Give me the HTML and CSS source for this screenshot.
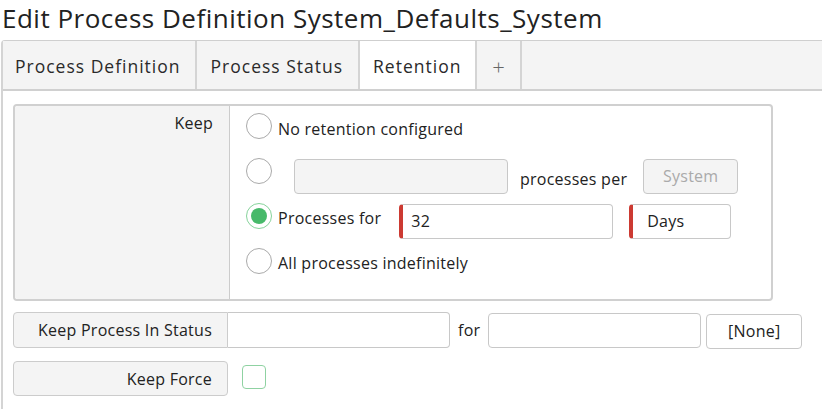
FILE: index.html
```html
<!DOCTYPE html>
<html>
<head>
<meta charset="utf-8">
<link rel="stylesheet" href="styles.css">
</head>
<body>
<h1 class="title">Edit Process Definition System_Defaults_System</h1>
<div class="editor">
  <div class="tabs">
    <div class="tab">Process Definition</div>
    <div class="tab tab-status">Process Status</div>
    <div class="tab tab-ret active">Retention</div>
    <div class="tab plus">+</div>
  </div>
  <div class="content">
    <div class="group">
      <div class="label">Keep</div>
      <div class="options">
        <div class="opt opt1">
          <span class="radio"></span>
          <span class="otext">No retention configured</span>
        </div>
        <div class="opt opt2">
          <span class="radio"></span>
          <span class="field disabled w214"></span>
          <span class="otext">processes per</span>
          <span class="btn disabled-btn">System</span>
        </div>
        <div class="opt opt3">
          <span class="radio checked"></span>
          <span class="otext">Processes for</span>
          <span class="field required w214">32</span>
          <span class="field required days">Days</span>
        </div>
        <div class="opt opt4">
          <span class="radio"></span>
          <span class="otext">All processes indefinitely</span>
        </div>
      </div>
    </div>
    <div class="row">
      <div class="label joined">Keep Process In Status</div>
      <span class="field attached"></span>
      <span class="rtext">for</span>
      <span class="field w214b"></span>
      <span class="btn none">[None]</span>
    </div>
    <div class="row">
      <div class="label single">Keep Force</div>
      <span class="check"></span>
    </div>
  </div>
</div>
</body>
</html>
```
FILE: styles.css
```css
* { box-sizing: border-box; }
body {
  margin: 0;
  font-family: "Open Sans", "Noto Sans", sans-serif;
  color: #222;
  background: #fff;
  letter-spacing: 0.25px;
}
.title {
  margin: 0;
  padding: 2px 0 0 2px;
  height: 40px;
  font-size: 26px;
  font-weight: 400;
  line-height: 32px;
  letter-spacing: 0.5px;
}
.editor {
  margin-left: 1px;
  border-left: 2px solid #d4d4d4;
  border-top: 1px solid #cfcfcf;
  border-top-left-radius: 4px;
  height: 369px;
}
.tabs {
  display: flex;
  height: 50px;
  background: #f4f4f4;
  border-bottom: 2px solid #d0d0d0;
}
.tab {
  padding: 0 14px 0 12px;
  font-size: 17.5px;
  letter-spacing: 1px;
  line-height: 50px;
  border-right: 2px solid #d4d4d4;
  color: #2a2a2a;
}
.tab-status { padding: 0 15px 0 14px; }
.tab-ret { padding: 0 14px 0 13px; }
.tab.active { background: #fff; }
.tab.plus {
  width: 45px;
  padding: 0;
  text-align: center;
  font-size: 22px;
  color: #666;
  font-weight: 300;
}
.content {
  padding: 13px 0 0 10px;
}
.group {
  display: flex;
  width: 760px;
  height: 197px;
  border: 2px solid #d0d0d0;
  border-radius: 4px;
}
.label {
  width: 215px;
  background: #f4f4f4;
  border-right: 1px solid #ccc;
  text-align: right;
  padding-right: 15px;
  font-size: 16px;
  line-height: 24px;
}
.group .label {
  padding-top: 5px;
  padding-right: 16px;
  border-top-left-radius: 3px;
  border-bottom-left-radius: 3px;
}
.options {
  padding: 7px 0 0 16px;
  font-size: 16px;
}
.opt {
  display: flex;
  align-items: flex-start;
  height: 45px;
}
.radio {
  flex: none;
  width: 26px;
  height: 26px;
  border: 1.5px solid #aaa;
  border-radius: 50%;
  background: #fff;
  display: flex;
  align-items: center;
  justify-content: center;
}
.radio.checked {
  border: 1.5px solid #86d39b;
}
.radio.checked::after {
  content: "";
  width: 16px;
  height: 16px;
  border-radius: 50%;
  background: #47b96a;
}
.otext {
  line-height: 24px;
  margin-left: 6px;
}
.opt1 .otext { margin-top: 4px; }
.opt2 .field { margin: 1px 0 0 22px; }
.opt2 .otext { margin: 9px 0 0 12px; }
.opt2 .btn { margin: 1px 0 0 16px; }
.opt3 .otext { margin-top: 3px; }
.opt3 .field { margin-top: 1px; }
.opt3 .w214 { margin-left: 18px; }
.opt3 .days { margin-left: 16px; }
.opt4 { height: 30px; }
.opt4 .otext { margin-top: 3px; }
.field {
  display: block;
  flex: none;
  height: 35px;
  border: 1px solid #c8c8c8;
  border-radius: 4px;
  background: #fff;
  font-size: 16px;
  line-height: 33px;
}
.field.disabled { background: #f4f4f4; }
.w214 { width: 214px; }
.field.required {
  border-left: 4px solid #cc3a32;
  padding-left: 8px;
}
.days { width: 102px; padding-left: 14px !important; }
.btn {
  display: block;
  flex: none;
  height: 35px;
  border: 1px solid #c8c8c8;
  border-radius: 4px;
  font-size: 16px;
  line-height: 33px;
  text-align: center;
}
.disabled-btn {
  width: 95px;
  background: #f4f4f4;
  color: #aaa;
}
.row {
  display: flex;
  align-items: center;
  margin-top: 11px;
  height: 36px;
}
.row + .row { margin-top: 12px; }
.row .label {
  height: 36px;
  line-height: 34px;
  border: 1px solid #ccc;
  border-radius: 4px;
}
.row .label.joined {
  border-top-right-radius: 0;
  border-bottom-right-radius: 0;
}
.row .label.single { height: 35px; }
.attached {
  width: 222px;
  height: 36px;
  border-left: none;
  border-top-left-radius: 0;
  border-bottom-left-radius: 0;
}
.rtext {
  font-size: 16px;
  margin: 0 8px 0 8px;
}
.w214b { width: 213px; height: 35px; }
.none {
  width: 96px;
  margin-left: 5px;
  margin-top: 2px;
}
.check {
  width: 24px;
  height: 24px;
  margin-left: 14px;
  margin-top: -3px;
  border: 1.5px solid #8fd2a2;
  border-radius: 4px;
}
```
